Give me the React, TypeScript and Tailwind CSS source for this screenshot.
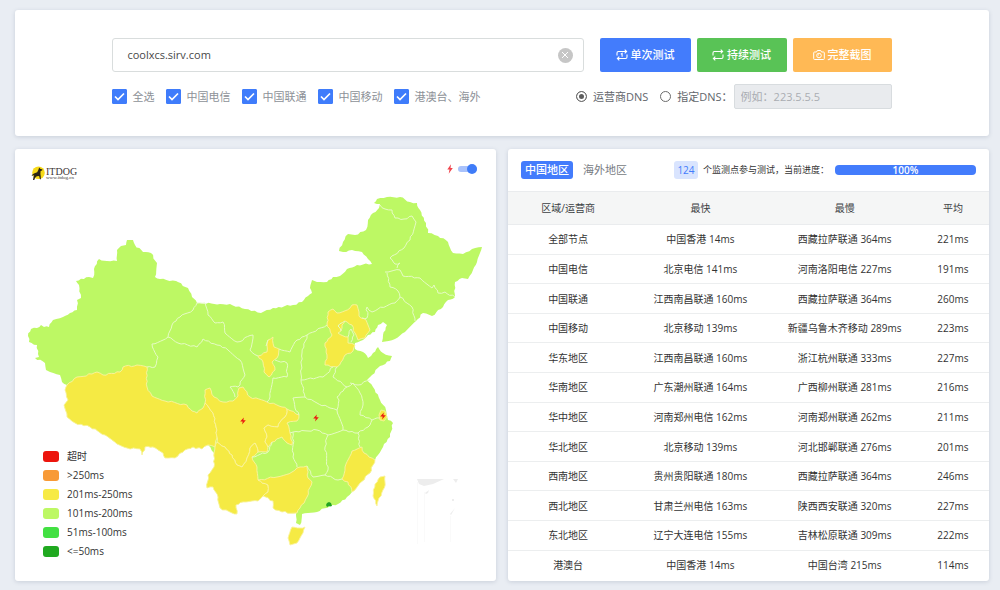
import React, { useState } from "react";

type Point = [number, number];

const GREEN = "#bdf864";
const YELLOW = "#f5ea44";
const BORDER = "#e6fbc4";

const mainland =
  "28,336 31,329 37,328 41,325 44,327 49,327 53,320 63,317 70,313 77,310 77,300 81,298 79,285 76,281 89,277 93,278 94,269 99,259 107,261 117,261 117,250 121,246 126,245 127,240 133,240 135,245 143,252 151,253 157,263 155,277 160,279 176,281 188,288 192,297 197,303 220,304 230,304 245,309 261,313 273,308 293,305 302,302 308,296 312,293 310,288 312,280 317,282 327,282 333,277 340,276 347,269 357,265 372,264 368,259 362,252 352,250 343,252 339,251 343,242 348,234 355,235 366,230 368,220 373,213 379,208 380,204 374,203 377,199 387,197 400,197 410,202 417,203 420,210 426,223 428,233 438,236 448,242 453,253 463,254 472,249 482,247 477,262 473,270 468,279 462,278 455,282 455,297 448,300 443,307 432,316 423,313 416,321 405,332 395,339 382,342 383,335 387,325 383,322 378,325 375,332 368,335 363,340 355,343 355,349 363,352 368,358 373,353 378,347 383,353 392,356 390,361 380,366 372,375 367,380 373,387 380,400 386,410 388,420 393,423 390,437 383,447 378,455 374,463 370,473 360,483 352,492 347,497 338,504 330,506 317,512 302,514 300,525 296,523 296,513 282,512 273,508 273,501 263,496 258,501 243,502 236,505 237,514 232,513 220,508 218,497 213,487 207,488 208,475 214,467 214,453 208,445 202,449 193,447 185,450 175,458 165,458 163,453 153,447 145,447 142,455 140,449 127,448 117,444 105,435 90,427 75,423 67,417 64,405 68,400 65,390 67,385 62,382 60,375 50,372 46,370 45,363 35,358 39,357 37,345 29,342";

const warmProvinces = [
  "67,385 77,377 92,374 97,372 103,375 120,372 123,367 137,365 147,367 147,387 152,396 165,401 187,405 192,411 197,413 203,408 205,403 213,413 216,427 217,438 215,447 208,445 202,449 193,447 185,450 175,458 165,458 163,453 153,447 145,447 142,455 140,449 127,448 117,444 105,435 90,427 75,423 67,417 64,405 68,400 65,390",
  "205,403 205,390 210,388 214,397 223,402 233,401 238,396 239,388 243,387 250,397 267,402 282,407 287,409 285,417 280,422 278,427 268,425 264,428 267,437 265,442 268,447 267,452 258,452 255,443 250,448 247,458 242,467 237,465 232,455 225,447 217,442 216,427 213,413",
  "287,409 299,415 297,421 287,423 290,433 292,445 287,443 282,437 272,442 268,447 265,442 267,437 264,428 268,425 278,427 280,422 285,417",
  "217,442 225,447 232,455 237,465 242,467 247,458 250,448 255,443 258,452 252,457 257,467 258,480 268,485 268,492 263,496 258,501 243,502 236,505 237,514 232,513 220,508 218,497 213,487 207,488 208,475 214,467 214,453 215,447",
  "258,480 277,477 292,472 300,467 307,466 308,478 312,482 307,497 300,508 297,513 282,512 273,508 273,501 263,496 268,492 268,485",
  "268,340 273,337 274,347 279,349 277,358 272,362 275,370 269,377 264,372 263,362 258,356 267,352",
  "328,312 333,309 337,313 350,308 352,305 357,305 359,312 359,316 366,320 370,330 365,338 358,340 355,333 352,325 345,321 342,325 341,331 338,333 348,337 348,343 355,345 353,351 345,355 341,362 337,367 325,365 327,355 325,343 332,335 327,323",
  "352,451 362,447 364,453 375,460 370,473 360,483 352,492 348,482 342,479 345,467",
  "380,477 385,476 385,482 383,490 378,501 377,506 373,496 375,484",
  "292,527 300,528 305,527 303,533 297,543 290,545 288,538",
];

const provinceBorders = [
  "197,303 193,310 180,317 172,325 168,337 152,344 158,357 155,367 147,367",
  "168,337 178,343 197,347 203,339 217,345 228,350 240,360 245,375 238,387 230,387 235,397",
  "197,303 205,303 208,315 215,323 223,322 225,333 237,342 253,335 250,350 258,356",
  "279,349 290,352 297,340 307,335 327,325",
  "307,335 302,353 301,380 323,377 333,367",
  "275,360 287,363 287,377 273,378 270,397 267,402",
  "301,380 305,397 293,398 295,408 299,415",
  "305,397 317,403 330,408 337,410 339,400 337,397 347,387 333,377 337,367",
  "337,410 343,430 328,435 317,430 293,432 290,433",
  "347,387 353,383 360,393 363,405 360,415 372,420 368,427 358,433 343,430",
  "350,383 358,385 370,380",
  "380,418 372,420",
  "328,435 325,447 328,470 325,475 338,480 342,479",
  "293,432 293,457 297,467",
  "307,466 313,477 325,475",
  "358,433 360,447",
  "252,457 268,452 272,442",
  "380,205 385,209 392,210 395,218 404,219 412,216 416,222 410,240 404,248 390,258 395,264 400,263 397,268",
  "385,272 400,270 403,276 420,278 432,288 434,285 438,293 445,292 455,297",
  "387,273 390,287 398,291 400,297 395,303 378,309 372,312 367,307 367,318 362,318",
  "400,297 412,307 415,321",
  "341,331 338,326 345,321",
  "348,337 351,329 354,335 351,342",
  "268,340 266,346",
];

const strikes: Point[] = [
  [243, 421],
  [316, 418],
  [383, 416],
];

function parse(text: string): Point[] {
  return text.split(" ").map((pair) => pair.split(",").map(Number) as Point);
}

// Splits an edge into short uneven steps; both directions of an edge give the same steps.
function roughEdge(a: Point, b: Point): Point[] {
  const flip = a[0] > b[0] || (a[0] === b[0] && a[1] > b[1]);
  const [p, q] = flip ? [b, a] : [a, b];
  const dx = q[0] - p[0];
  const dy = q[1] - p[1];
  const length = Math.hypot(dx, dy);
  const steps = Math.max(1, Math.round(length / 3));
  const inner: Point[] = [];
  for (let i = 1; i < steps; i++) {
    const seed = Math.sin(p[0] * 12.9 + p[1] * 78.2 + i * 37.7) * 43758.5;
    const shift = (seed - Math.floor(seed) - 0.5) * 1.8;
    const t = i / steps;
    inner.push([p[0] + dx * t - (dy / length) * shift, p[1] + dy * t + (dx / length) * shift]);
  }
  return flip ? inner.reverse() : inner;
}

function toPath(text: string, closed: boolean): string {
  const points = parse(text);
  const out: Point[] = [];
  points.forEach((point, i) => {
    out.push(point);
    if (i < points.length - 1) out.push(...roughEdge(point, points[i + 1]));
    else if (closed) out.push(...roughEdge(point, points[0]));
  });
  return "M" + out.map(([x, y]) => `${x.toFixed(1)} ${y.toFixed(1)}`).join("L") + (closed ? "Z" : "");
}

function ChinaMap() {
  return (
    <svg viewBox="15 149 481 432" className="w-full [grid-area:1/1]" role="img" aria-label="中国地区">
      <path d={toPath(mainland, true)} fill={GREEN} />
      {warmProvinces.map((d, i) => (
        <path key={i} d={toPath(d, true)} fill={YELLOW} stroke="#faf3a0" strokeWidth="0.9" strokeLinejoin="round" />
      ))}
      {provinceBorders.map((d, i) => (
        <path key={i} d={toPath(d, false)} fill="none" stroke={BORDER} strokeWidth="1" strokeLinejoin="round" />
      ))}
      <path d="M381 410l4 1 2 6-3 4-4-1-1-5z" fill={YELLOW} stroke="#faf3a0" strokeWidth="0.8" />
      <path d="M326 505l1-2 2-1 2 1 1 3-2 .6-1-.6-2 1z" fill="#22a422" />
      {strikes.map(([x, y]) => (
        <path key={x} transform={`translate(${x} ${y})`} d="M.8-3.6L-2.8.6H-.3L-.9 3.6 2.8-.8H.4z" fill="#ea1a10" />
      ))}
      <g fill="#ededed">
        <path d="M417 479h27l-11 5-9 2-5-2z" />
        <path d="M425 493l4-3-1 3-2 1z" />
        <path d="M453 479h5l-2 4z" />
        <path d="M452 499h2v2h-2zM450 514l5-6-4 7z" />
      </g>
      <path d="M417.500 482v62M424.500 492v50M450.500 516v26" stroke="#fafafa" fill="none" />
    </svg>
  );
}

const legend = [
  { label: "超时", swatch: "bg-[#ec150d]" },
  { label: ">250ms", swatch: "bg-[#f89a36]" },
  { label: "201ms-250ms", swatch: "bg-[#f7ea45]" },
  { label: "101ms-200ms", swatch: "bg-[#bdf864]" },
  { label: "51ms-100ms", swatch: "bg-[#42e042]" },
  { label: "<=50ms", swatch: "bg-[#20a920]" },
];

const rows = [
  ["全部节点", "中国香港 14ms", "西藏拉萨联通 364ms", "221ms"],
  ["中国电信", "北京电信 141ms", "河南洛阳电信 227ms", "191ms"],
  ["中国联通", "江西南昌联通 160ms", "西藏拉萨联通 364ms", "260ms"],
  ["中国移动", "北京移动 139ms", "新疆乌鲁木齐移动 289ms", "223ms"],
  ["华东地区", "江西南昌联通 160ms", "浙江杭州联通 333ms", "227ms"],
  ["华南地区", "广东潮州联通 164ms", "广西柳州联通 281ms", "216ms"],
  ["华中地区", "河南郑州电信 162ms", "河南郑州联通 262ms", "211ms"],
  ["华北地区", "北京移动 139ms", "河北邯郸联通 276ms", "201ms"],
  ["西南地区", "贵州贵阳联通 180ms", "西藏拉萨联通 364ms", "246ms"],
  ["西北地区", "甘肃兰州电信 163ms", "陕西西安联通 320ms", "227ms"],
  ["东北地区", "辽宁大连电信 155ms", "吉林松原联通 309ms", "222ms"],
  ["港澳台", "中国香港 14ms", "中国台湾 215ms", "114ms"],
];

function RepeatIcon({ once = false }: { once?: boolean }) {
  return (
    <svg viewBox="0 0 12 12" className="size-3" fill="none" stroke="currentColor" strokeWidth="1.100" aria-hidden="true">
      <path d="M1 6.500V3.900Q1 2.500 2.400 2.500H10.500M8.700.7l1.900 1.800-1.900 1.800M11 5.500v2.600q0 1.400-1.400 1.400H1.500M3.300 7.700L1.400 9.500l1.900 1.800" />
      {once && <path d="M4.800 5.200l1.300-.8v3.400" />}
    </svg>
  );
}

function CameraIcon() {
  return (
    <svg viewBox="0 0 12 12" className="size-3" fill="none" stroke="currentColor" strokeWidth="1" aria-hidden="true">
      <path d="M1.500 3h2L4.300 1.500h3.400L8.500 3h2q.8 0 .8.800v5.900q0 .8-.8.800h-9q-.8 0-.8-.8V3.800q0-.8.800-.8z" />
      <circle cx="6" cy="6.500" r="2.300" />
      <path d="M6 5.600a.9.900 0 0 0-.9.900" />
    </svg>
  );
}

function CheckItem({ label }: { label: string }) {
  return (
    <label className="flex items-center gap-[5px]">
      <span className="grid size-[15px] place-items-center">
        <input
          type="checkbox"
          defaultChecked
          className="peer size-[15px] appearance-none rounded-[1px] border border-[#3f7cfb] bg-white [grid-area:1/1] checked:bg-[#3f7cfb]"
        />
        <svg
          viewBox="0 0 15 15"
          className="pointer-events-none hidden size-[15px] text-white [grid-area:1/1] peer-checked:block"
          fill="none"
          stroke="currentColor"
          strokeWidth="1.700"
          aria-hidden="true"
        >
          <path d="M3 7.500l3 3 6-6" />
        </svg>
      </span>
      {label}
    </label>
  );
}

function RadioItem({ label, value, checked, onChange }: { label: string; value: string; checked: boolean; onChange: (v: string) => void }) {
  return (
    <label className="flex items-center gap-[6px]">
      <input
        type="radio"
        name="dns"
        value={value}
        checked={checked}
        onChange={() => onChange(value)}
        className="size-[11px] appearance-none rounded-full border border-[#6b6b6b] bg-white checked:bg-[#5c5c5c] checked:shadow-[inset_0_0_0_2px_white]"
      />
      {label}
    </label>
  );
}

function Logo() {
  return (
    <a href="#" className="flex items-center gap-px text-[#3b3434]">
      <svg viewBox="0 0 14 14" className="size-[14px]" aria-hidden="true">
        <circle cx="7.500" cy="6.800" r="6.300" fill="#f6d917" />
        <path
          d="M8.200 1.400l1 1.300 2.300.9-.4 1-1.500.3-.2 3.200.3 2 .2 3.200H9l-.9-3.400-2.300.3-1.700 1.500-.8 2.200H2l.5-2.900.7-2-1.700.8-1-.5L3 7.400l3.200-1.200 1.100-2.300z"
          fill="#2b2411"
        />
      </svg>
      <span className="flex flex-col font-['Liberation_Serif',serif]">
        <span className="text-[10px] leading-[9px] font-medium">ITDOG</span>
        <span className="text-[5px] leading-[4px]">www.itdog.cn</span>
      </span>
    </a>
  );
}

export default function App() {
  const [host, setHost] = useState("coolxcs.sirv.com");
  const [dns, setDns] = useState("isp");
  const [flash, setFlash] = useState(true);
  const card = "rounded-[3px] bg-white shadow-[0_1px_4px_rgba(60,80,110,0.18)]";
  const action = "flex h-[34px] items-center justify-center gap-[3px] rounded-[2px] font-medium text-white";

  return (
    <div className="flex min-h-screen flex-col gap-[13px] bg-[#e9edf3] pt-[10px] pr-[11px] pb-2 pl-[15px] font-['Open_Sans','Noto_Sans_CJK_SC',sans-serif] text-[11px] leading-4 text-[#444]">
      <section className={card}>
        <form className="mx-auto flex w-4/5 flex-col gap-3 pt-7 pb-[27px]" onSubmit={(e) => e.preventDefault()}>
          <div className="flex items-center gap-4">
            <div className="flex h-[34px] min-w-0 flex-1 items-center rounded-[3px] border border-[#d9dddd] pr-[10px] pl-[14px]">
              <input
                aria-label="域名"
                value={host}
                onChange={(e) => setHost(e.target.value)}
                className="min-w-0 flex-1 bg-transparent text-[11px] text-[#484848] outline-none"
              />
              <button
                type="button"
                aria-label="清空"
                onClick={() => setHost("")}
                className="grid size-[15px] place-items-center rounded-full bg-[#c6c6c6] text-white"
              >
                <svg viewBox="0 0 8 8" className="size-2" stroke="currentColor" strokeWidth="1" aria-hidden="true">
                  <path d="M1 1l6 6M7 1L1 7" />
                </svg>
              </button>
            </div>
            <div className="flex gap-[6px]">
              <button type="submit" className={`${action} w-[91px] bg-[#437cfc]`}>
                <RepeatIcon once />
                单次测试
              </button>
              <button type="button" className={`${action} w-[90px] bg-[#59c356]`}>
                <RepeatIcon />
                持续测试
              </button>
              <button type="button" className={`${action} w-[99px] bg-[#ffb955]`}>
                <CameraIcon />
                完整截图
              </button>
            </div>
          </div>
          <div className="flex items-center justify-between">
            <div className="flex gap-3 text-[#8d9197]">
              {["全选", "中国电信", "中国联通", "中国移动", "港澳台、海外"].map((label) => (
                <CheckItem key={label} label={label} />
              ))}
            </div>
            <div className="flex items-center gap-3 text-[#62666b]">
              <RadioItem label="运营商DNS" value="isp" checked={dns === "isp"} onChange={setDns} />
              <div className="flex items-center gap-px">
                <RadioItem label="指定DNS：" value="custom" checked={dns === "custom"} onChange={setDns} />
                <input
                  aria-label="指定DNS"
                  placeholder="例如：223.5.5.5"
                  disabled={dns !== "custom"}
                  className="h-[25px] w-[158px] rounded-[2px] border border-[#d8dcdf] bg-white px-[6px] placeholder:text-[#a9adb2] disabled:bg-[#e9ebee]"
                />
              </div>
            </div>
          </div>
        </form>
      </section>

      <main className="grid grid-cols-2 gap-3">
        <section className={`${card} grid`}>
          <ChinaMap />
          <div className="z-10 flex items-start justify-between self-start pt-[15px] pr-[19px] pl-4 [grid-area:1/1]">
            <div className="pt-[2px]">
              <Logo />
            </div>
            <label className="flex items-center gap-[5px]">
              <svg viewBox="0 0 6 10" className="h-[10px] w-[6px]" aria-hidden="true">
                <path d="M4 .3L.3 5.500h2.200L1.700 9.700 5.800 4H3.500z" fill="#f0444c" />
              </svg>
              <input
                type="checkbox"
                role="switch"
                aria-label="闪电"
                checked={flash}
                onChange={(e) => setFlash(e.target.checked)}
                className="flex h-[6px] w-[19px] appearance-none items-center rounded-full bg-[#a9c2fb] before:size-[10px] before:rounded-full before:bg-[#3f7cf8] before:content-[''] checked:justify-end"
              />
            </label>
          </div>
          <ul className="z-10 flex flex-col gap-[3px] self-end justify-self-start pb-[22px] pl-7 text-[10px] text-[#333] [grid-area:1/1]">
            {legend.map(({ label, swatch }) => (
              <li key={label} className="flex items-center gap-2">
                <span className={`h-[11px] w-4 rounded-[3px] ${swatch}`} />
                {label}
              </li>
            ))}
          </ul>
        </section>

        <section className={card}>
          <header className="flex h-[42px] items-center px-[13px]">
            <div className="flex flex-1 items-center gap-[6px]">
              <button type="button" className="h-[18px] rounded-[3px] bg-[#437cfc] px-1 font-medium text-white">
                中国地区
              </button>
              <button type="button" className="h-[18px] px-1 text-[#777b82]">
                海外地区
              </button>
            </div>
            <div className="flex items-center gap-[5px] text-[9px] text-[#333]">
              <span className="grid h-[18px] w-6 place-items-center rounded-[3px] bg-[#d9e4fe] text-[10px] text-[#437cfc]">124</span>
              <span>个监测点参与测试，当前进度：</span>
            </div>
            <div
              role="progressbar"
              aria-label="当前进度"
              aria-valuenow={100}
              className="ml-[6px] h-[10px] w-[141px] rounded-[4px] bg-[#437cfc] text-center text-[10px] leading-[10px] font-semibold text-white"
            >
              100%
            </div>
          </header>
          <table className="h-[388px] w-full table-fixed border-collapse text-center text-[10px] text-[#333]">
            <colgroup>
              <col className="w-[25%]" />
              <col className="w-[30%]" />
              <col className="w-[30%]" />
              <col className="w-[15%]" />
            </colgroup>
            <thead>
              <tr className="h-[33px] border-y border-[#eaecee] bg-[#f5f6f6] text-[#3c3f43]">
                <th className="font-normal">区域/运营商</th>
                <th className="font-normal">最快</th>
                <th className="font-normal">最慢</th>
                <th className="font-normal">平均</th>
              </tr>
            </thead>
            <tbody>
              {rows.map((row) => (
                <tr key={row[0]} className="border-b border-[#eceeef] last:border-b-0">
                  {row.map((cell, i) => (
                    <td key={i} className="whitespace-nowrap">
                      {cell}
                    </td>
                  ))}
                </tr>
              ))}
            </tbody>
          </table>
        </section>
      </main>
    </div>
  );
}
